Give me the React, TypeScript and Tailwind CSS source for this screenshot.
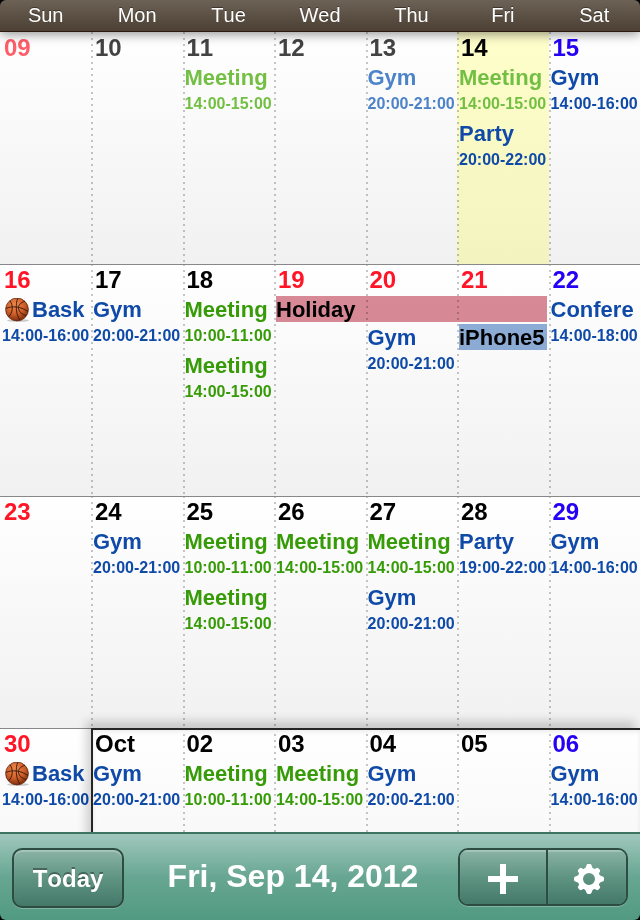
import type { ReactNode } from "react";

type Tone = "work" | "private";

type CalendarEvent =
  | { kind: "timed"; title: string; time: string; tone: Tone; past?: boolean; ball?: boolean }
  | { kind: "bar"; title: string; days: 1 | 3; color: "rose" | "blue" }
  | { kind: "spacer" };

type Day = {
  label: string;
  tone?: "holiday" | "saturday";
  past?: boolean;
  today?: boolean;
  events?: CalendarEvent[];
};

const meeting = (time: string, past = false): CalendarEvent => ({ kind: "timed", title: "Meeting", time, tone: "work", past });
const own = (title: string, time: string, past = false): CalendarEvent => ({ kind: "timed", title, time, tone: "private", past });
const basket: CalendarEvent = { kind: "timed", title: "Bask", time: "14:00-16:00", tone: "private", ball: true };
const spacer: CalendarEvent = { kind: "spacer" };

const weekdays = ["Sun", "Mon", "Tue", "Wed", "Thu", "Fri", "Sat"];

const weeks: Day[][] = [
  [
    { label: "09", tone: "holiday", past: true },
    { label: "10", past: true },
    { label: "11", past: true, events: [meeting("14:00-15:00", true)] },
    { label: "12", past: true },
    { label: "13", past: true, events: [own("Gym", "20:00-21:00", true)] },
    { label: "14", today: true, events: [meeting("14:00-15:00", true), own("Party", "20:00-22:00")] },
    { label: "15", tone: "saturday", events: [own("Gym", "14:00-16:00")] },
  ],
  [
    { label: "16", tone: "holiday", events: [basket] },
    { label: "17", events: [own("Gym", "20:00-21:00")] },
    { label: "18", events: [meeting("10:00-11:00"), meeting("14:00-15:00")] },
    { label: "19", tone: "holiday", events: [{ kind: "bar", title: "Holiday", days: 3, color: "rose" }] },
    { label: "20", tone: "holiday", events: [spacer, own("Gym", "20:00-21:00")] },
    { label: "21", tone: "holiday", events: [spacer, { kind: "bar", title: "iPhone5", days: 1, color: "blue" }] },
    { label: "22", tone: "saturday", events: [own("Confere", "14:00-18:00")] },
  ],
  [
    { label: "23", tone: "holiday" },
    { label: "24", events: [own("Gym", "20:00-21:00")] },
    { label: "25", events: [meeting("10:00-11:00"), meeting("14:00-15:00")] },
    { label: "26", events: [meeting("14:00-15:00")] },
    { label: "27", events: [meeting("14:00-15:00"), own("Gym", "20:00-21:00")] },
    { label: "28", events: [own("Party", "19:00-22:00")] },
    { label: "29", tone: "saturday", events: [own("Gym", "14:00-16:00")] },
  ],
  [
    { label: "30", tone: "holiday", events: [basket] },
    { label: "Oct", events: [own("Gym", "20:00-21:00")] },
    { label: "02", events: [meeting("10:00-11:00")] },
    { label: "03", events: [meeting("14:00-15:00")] },
    { label: "04", events: [own("Gym", "20:00-21:00")] },
    { label: "05" },
    { label: "06", tone: "saturday", events: [own("Gym", "14:00-16:00")] },
  ],
];

function Basketball() {
  return (
    <svg viewBox="0 0 24 24" className="ml-[3px] mr-[3px] size-6 shrink-0" aria-hidden="true">
      <defs>
        <radialGradient id="ball" cx="0.42" cy="0.3" r="0.72">
          <stop offset="0" stopColor="#ee8a4e" />
          <stop offset="0.55" stopColor="#cf5f28" />
          <stop offset="1" stopColor="#7d2c0d" />
        </radialGradient>
      </defs>
      <ellipse cx="13" cy="22.5" rx="11" ry="1.4" fill="#000" opacity="0.2" />
      <circle cx="12" cy="11.5" r="11.4" fill="url(#ball)" stroke="#5a2410" strokeWidth="0.7" />
      <g fill="none" stroke="#35170a" strokeWidth="0.9">
        <path d="M12.6 0.5C10.5 6 10.5 16 15 22.2" />
        <path d="M0.8 10.5C7 7.8 15 8 23 13.5" />
        <path d="M5 2.8C8.5 7.5 8 14.5 3.5 18.8" />
        <path d="M20 3.3C15.5 4.5 13 7.5 13.5 10.5C14 14 17 16.5 21 17.5" />
      </g>
    </svg>
  );
}

function EventItem({ event }: { event: CalendarEvent }) {
  if (event.kind === "spacer") return <div className="h-7" />;

  if (event.kind === "bar") {
    const width = event.days === 3 ? "w-[calc(300%_+_2px)]" : "w-[calc(100%_-_2px)]";
    const color = event.color === "rose" ? "bg-[#d98a97]" : "bg-[#8eafda]";
    return (
      <div className={`relative z-10 mb-[2px] h-[26px] whitespace-nowrap text-[22px] leading-7 text-black mix-blend-multiply ${width} ${color}`}>
        {event.title}
      </div>
    );
  }

  const color =
    event.tone === "work"
      ? event.past ? "text-[#73bf43]" : "text-[#379b08]"
      : event.past ? "text-[#4d83c8]" : "text-[#0f4aa8]";
  return (
    <div className={`h-14 whitespace-nowrap ${color}`}>
      <div className="flex items-center text-[22px] leading-7">
        {event.ball && <Basketball />}
        {event.title}
      </div>
      <div className="text-base leading-[23px]">{event.time}</div>
    </div>
  );
}

function DayCell({ day, first }: { day: Day; first: boolean }) {
  const color =
    day.tone === "holiday"
      ? day.past ? "text-[#ff5e68]" : "text-[#ff1526]"
      : day.tone === "saturday"
        ? "text-[#2400f5]"
        : day.past ? "text-[#434343]" : "text-black";
  const dots = first
    ? ""
    : "bg-[repeating-linear-gradient(to_bottom,#00000038_0px,#00000038_2px,transparent_2px,transparent_6px)] bg-[length:2px_100%] bg-no-repeat";
  return (
    <div className={`min-w-0 pl-[2px] pt-px ${dots} ${day.today ? "bg-[#ffff0033]" : ""}`}>
      <div className={`mb-px pl-[2px] text-2xl leading-[30px] ${color}`}>{day.label}</div>
      {day.events?.map((event, i) => <EventItem key={i} event={event} />)}
    </div>
  );
}

function Week({ days, first, children }: { days: Day[]; first: boolean; children?: ReactNode }) {
  return (
    <div className="relative h-[232px] shrink-0 bg-linear-to-b from-white to-[#f1f1f1]">
      <div className="grid h-full grid-cols-[182fr_repeat(6,183fr)]">
        {days.map((day, i) => <DayCell key={day.label} day={day} first={i === 0} />)}
      </div>
      {!first && <div className="absolute inset-x-0 top-0 h-px bg-[#888]" />}
      {children}
    </div>
  );
}

const face =
  "flex items-center justify-center bg-linear-to-b from-[#8ab3a6] via-[#5f9482] to-[#44796a] text-white";

export default function App() {
  return (
    <div className="h-screen w-full bg-black font-['Liberation_Sans',Arial,sans-serif] [font-kerning:none]">
      <div className="flex h-full flex-col overflow-hidden rounded-md">
        <header className="relative z-20 grid h-8 shrink-0 grid-cols-7 border-b border-[#2b1a0c] bg-linear-to-b from-[#6d6256] to-[#4b4033] text-center text-xl leading-[31px] text-white shadow-[0_2px_12px_#00000073] [text-shadow:0_-1px_0_#00000066]">
          {weekdays.map((name) => <div key={name}>{name}</div>)}
        </header>

        <main className="min-h-0 flex-1 overflow-hidden bg-white font-bold">
          {weeks.map((days, i) => (
            <Week key={i} days={days} first={i === 0}>
              {i === 3 && (
                <div className="pointer-events-none absolute inset-y-0 left-[calc(100%/7)] right-0 border-l-2 border-t-2 border-[#262424] shadow-[-5px_-7px_9px_#0000002b,inset_0_2px_4px_#00000014]" />
              )}
            </Week>
          ))}
        </main>

        <footer className="flex h-22 shrink-0 items-start justify-between border-t-2 border-[#3c745f] bg-linear-to-b from-[#a0c8bc] via-[#67a692] to-[#519a81] px-3 pt-[14px] font-bold text-white">
          <button type="button" className={`${face} h-[60px] w-28 rounded-[10px] border-2 border-[#2d4d43] pt-[2px] text-2xl shadow-[inset_0_2px_1px_#ffffff40,0_1px_0_#ffffff40] [text-shadow:0_-2px_0_#00000059]`}>
            Today
          </button>
          <h1 className="pl-1 text-[32px] leading-14">Fri, Sep 14, 2012</h1>
          <div className="flex h-[58px] overflow-hidden rounded-[10px] border-2 border-[#2d4d43] shadow-[0_1px_0_#ffffff40]">
            <button type="button" aria-label="Add event" className={`${face} w-[86px] pt-1 shadow-[inset_0_2px_1px_#ffffff40]`}>
              <svg viewBox="0 0 30 30" className="size-[30px]" fill="#fff" aria-hidden="true">
                <path d="M12 0h6v12h12v6H18v12h-6V18H0v-6h12z" />
              </svg>
            </button>
            <button type="button" aria-label="Settings" className={`${face} w-20 border-l-2 border-[#2d4d43] pl-1 pt-1 shadow-[inset_0_2px_1px_#ffffff40]`}>
              <svg viewBox="-15 -15 30 30" className="size-[30px]" aria-hidden="true">
                <circle r="8.7" fill="none" stroke="#fff" strokeWidth="5.4" />
                {[0, 90, 180, 270].map((angle) => (
                  <path key={angle} transform={`rotate(${angle})`} d="M-4 -10L-2.6 -13.6Q-2.2 -15 -1 -15H1Q2.2 -15 2.6 -13.6L4 -10Z" fill="#fff" />
                ))}
                {[45, 135, 225, 315].map((angle) => (
                  <path key={angle} transform={`rotate(${angle})`} d="M-3.4 -10L-2.4 -13.2Q-2 -14.2 -1 -14.2H1Q2 -14.2 2.4 -13.2L3.4 -10Z" fill="#fff" />
                ))}
              </svg>
            </button>
          </div>
        </footer>
      </div>
    </div>
  );
}
